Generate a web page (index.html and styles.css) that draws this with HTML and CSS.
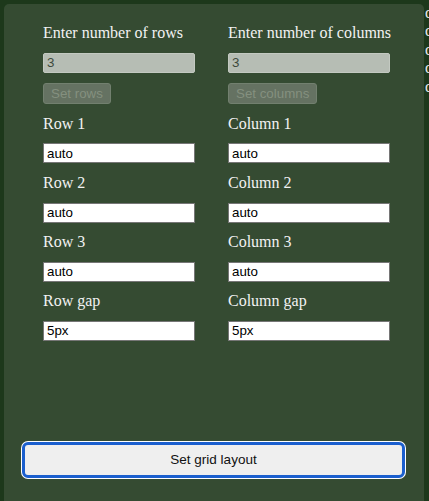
FILE: index.html
```html
<!DOCTYPE html>
<html>
<head>
<meta charset="utf-8">
<link rel="stylesheet" href="styles.css">
</head>
<body>
<div class="panel">
  <form class="grid-form">
    <label class="lbl">Enter number of rows</label>
    <label class="lbl">Enter number of columns</label>
    <input class="field count" type="text" value="3" disabled>
    <input class="field count" type="text" value="3" disabled>
    <div><button type="button" class="small-btn" disabled>Set rows</button></div>
    <div><button type="button" class="small-btn" disabled>Set columns</button></div>
    <label class="lbl">Row 1</label>
    <label class="lbl">Column 1</label>
    <input class="field" type="text" value="auto">
    <input class="field" type="text" value="auto">
    <label class="lbl">Row 2</label>
    <label class="lbl">Column 2</label>
    <input class="field" type="text" value="auto">
    <input class="field" type="text" value="auto">
    <label class="lbl">Row 3</label>
    <label class="lbl">Column 3</label>
    <input class="field" type="text" value="auto">
    <input class="field" type="text" value="auto">
    <label class="lbl">Row gap</label>
    <label class="lbl">Column gap</label>
    <input class="field" type="text" value="5px">
    <input class="field" type="text" value="5px">
  </form>
  <button type="button" class="main-btn">Set grid layout</button>
</div>
<div class="items">
  <div>div</div>
  <div>div</div>
  <div>div</div>
  <div>div</div>
  <div>div</div>
</div>
</body>
</html>
```
FILE: styles.css
```css
html {
  overflow: hidden;
  height: 100%;
}
body {
  margin: 0;
  padding: 4px 0 0 4px;
  background: #1d381b;
  display: flex;
  align-items: flex-start;
  height: 100%;
  box-sizing: border-box;
  font-family: "Liberation Serif", serif;
}
.panel {
  flex: 0 0 420px;
  width: 420px;
  height: 520px;
  background: #354b32;
  border-radius: 5px 5px 0 0;
  box-sizing: border-box;
  padding: 20px 18px 0 18px;
  display: flex;
  flex-direction: column;
}
.grid-form {
  display: grid;
  grid-template-columns: 152px 162px;
  column-gap: 33px;
  row-gap: 10.4px;
  margin: 0 0 0 21px;
  align-items: start;
}
.lbl {
  color: #f2f2f2;
  font-size: 16px;
  line-height: 18.4px;
  white-space: nowrap;
}
.field {
  box-sizing: border-box;
  width: 100%;
  height: 20px;
  margin: 0;
  padding: 1px 3px;
  border: 1px solid #767676;
  background: #ffffff;
  color: #000;
  font-family: "Liberation Sans", Arial, sans-serif;
  font-size: 13.33px;
  border-radius: 0;
}
.field.count {
  background: #b6bdb4;
  color: #3f4a3d;
  border: 1px solid #c3c9c1;
  border-radius: 2px;
}
.small-btn {
  height: 21px;
  padding: 0 7px;
  margin: 0;
  background: #657262;
  border: 1px solid #72806f;
  border-radius: 3px;
  color: #84907f;
  font-family: "Liberation Sans", Arial, sans-serif;
  font-size: 13.33px;
  display: block;
}
.main-btn {
  margin-top: 101px;
  height: 36px;
  width: 383px;
  background: #efefef;
  border: 1px solid #fff;
  outline: 3px solid #1b5fce;
  outline-offset: -3px;
  border-radius: 6px;
  color: #111;
  font-family: "Liberation Sans", Arial, sans-serif;
  font-size: 13.5px;
  box-shadow: 0 0 0 1px #fff;
}
.items {
  padding: 0 0 0 1px;
  color: #eaeaea;
  font-size: 16px;
  line-height: 18.4px;
  white-space: nowrap;
}
```
